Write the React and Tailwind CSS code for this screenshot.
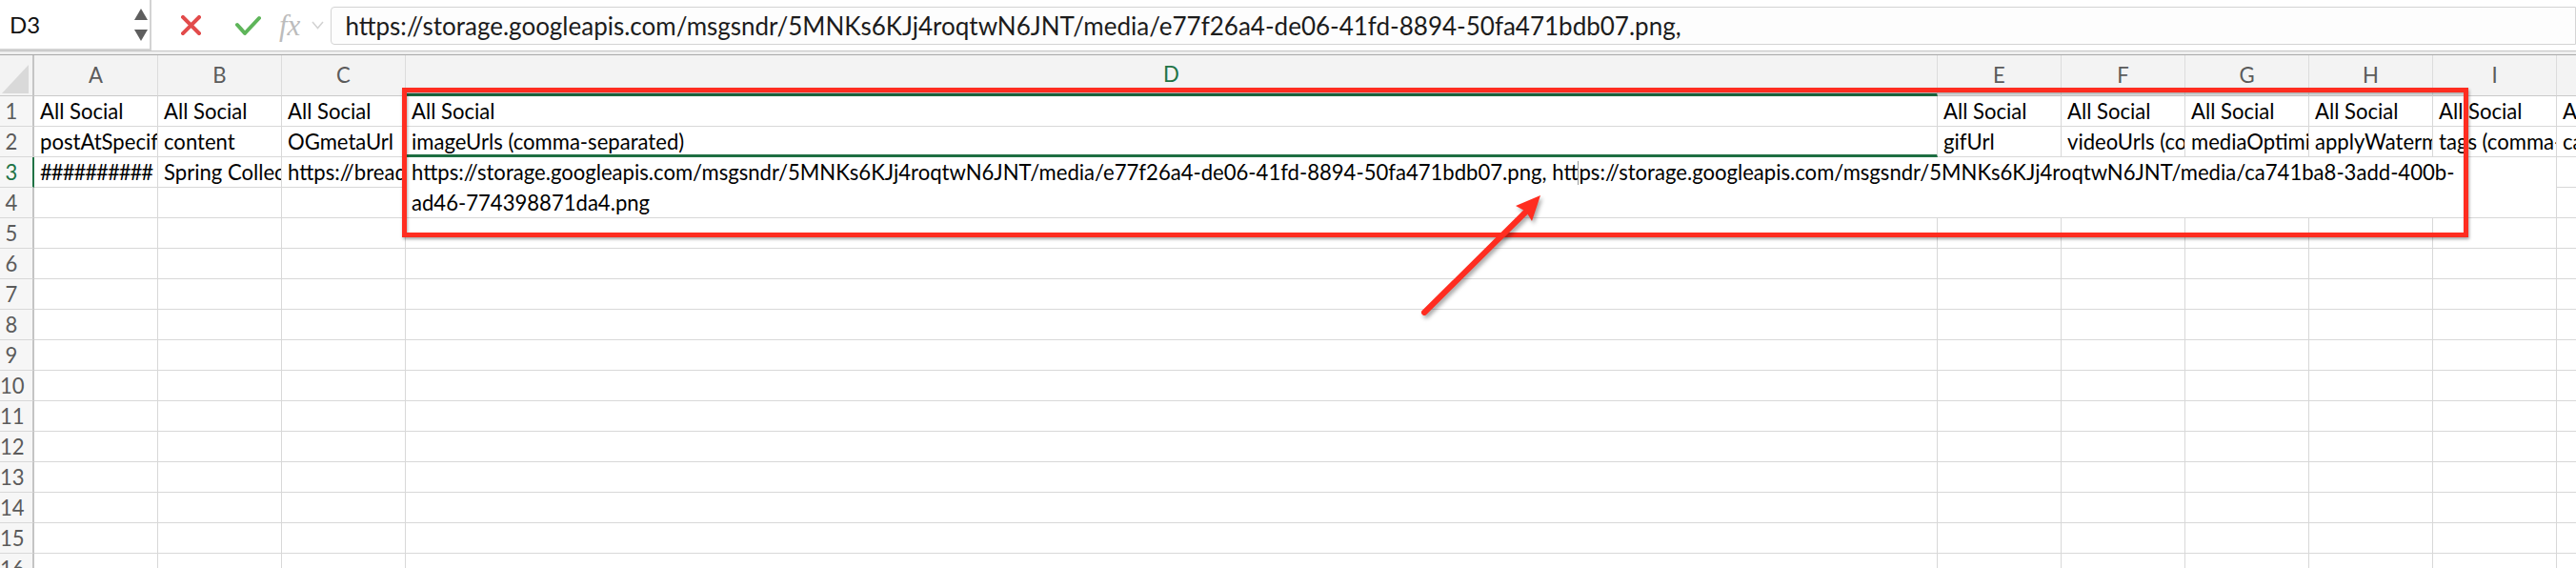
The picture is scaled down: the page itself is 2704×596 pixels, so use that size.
import React from 'react';

const COLS = ['A', 'B', 'C', 'D', 'E', 'F', 'G', 'H', 'I', 'J'];

const HEAD_ROW = Array(10).fill('All Social');
const FIELD_ROW = [
  'postAtSpecificTime',
  'content',
  'OGmetaUrl',
  'imageUrls (comma-separated)',
  'gifUrl',
  'videoUrls (comma-separated)',
  'mediaOptimization',
  'applyWatermark',
  'tags (comma-separated)',
  'category',
];

const URL_FIRST =
  'https://storage.googleapis.com/msgsndr/5MNKs6KJj4roqtwN6JNT/media/e77f26a4-de06-41fd-8894-50fa471bdb07.png';

const Cell = ({ children, className = '' }) => (
  <div
    className={`overflow-hidden whitespace-nowrap border-r border-b border-[#d8d8d8] px-[6px] leading-[31px] ${className}`}
  >
    {children}
  </div>
);

const RowHead = ({ n, active }) => (
  <div
    className={`flex bg-[#f6f6f6] border-b border-b-[#d8d8d8] border-r-2 ${
      active ? 'border-r-[#217346]' : 'border-r-[#c4c4c4]'
    }`}
  >
    <span
      className={`w-[24px] text-center leading-[31px] ${
        active ? 'text-[#217346]' : 'text-[#5b5b5b]'
      }`}
    >
      {n}
    </span>
  </div>
);

const FormulaBar = () => (
  <div className="flex h-[53px]">
    {/* name box */}
    <div className="flex w-[159px] items-center justify-between border-r-2 border-b-2 border-[#d3d3d3] pl-[10px] pr-[2px]">
      <span className="text-[24px] text-[#111]">D3</span>
      <svg width="14" height="34" viewBox="0 0 14 34">
        <polygon points="0,12 7,0 14,12" fill="#5e5e5e" />
        <polygon points="0,22 14,22 7,34" fill="#5e5e5e" />
      </svg>
    </div>

    {/* cancel / enter / fx */}
    <div className="flex items-center">
      <svg className="ml-[31px]" width="21" height="21" viewBox="0 0 21 21">
        <path d="M2 2 L19 19 M19 2 L2 19" stroke="#e24b4b" strokeWidth="4" strokeLinecap="square" />
      </svg>
      <svg className="ml-[36px]" width="27" height="22" viewBox="0 0 27 22">
        <path d="M2 10 L10 19 L25 3" stroke="#5eb55a" strokeWidth="4" fill="none" strokeLinecap="round" strokeLinejoin="round" />
      </svg>
      <span className="ml-[19px] font-['Liberation_Serif',serif] text-[31px] italic leading-none text-[#bcbcbc]">
        fx
      </span>
      <svg className="ml-[12px]" width="13" height="9" viewBox="0 0 13 9">
        <path d="M1 1 L6.5 7.5 L12 1" stroke="#d2d2d2" strokeWidth="1.5" fill="none" />
      </svg>
    </div>

    {/* formula input */}
    <div className="ml-[7px] mt-[7px] mb-[6px] flex flex-1 items-center rounded-l-[4px] border border-[#d4d4d4] bg-[#fdfdfd] pl-[14px] text-[26px] text-[#1c1c1c] whitespace-nowrap overflow-hidden">
      {URL_FIRST},
    </div>
  </div>
);

const Grid = () => (
  <div className="grid grid-cols-[36px_130px_130px_130px_1608px_130px_130px_130px_130px_130px_130px] grid-rows-[43px_repeat(16,32px)] text-[22.1px] text-black">
    {/* header row */}
    <div className="flex items-end justify-end bg-[#f3f3f3] border-r-2 border-r-[#c4c4c4] border-b border-b-[#c9c9c9] pr-[4px] pb-[2px]">
      <svg width="28" height="30" viewBox="0 0 28 30">
        <polygon points="0,30 28,30 28,0" fill="#d9d9d9" />
      </svg>
    </div>
    {COLS.map((c) => (
      <div
        key={c}
        className={`flex items-center justify-center bg-[#f3f3f3] border-r border-r-[#dcdcdc] ${
          c === 'D'
            ? 'border-b-[3px] border-b-[#1e6e42] text-[#217346]'
            : 'border-b border-b-[#c9c9c9] text-[#5b5b5b]'
        }`}
      >
        {c}
      </div>
    ))}

    {/* row 1 */}
    <RowHead n={1} />
    {HEAD_ROW.map((t, i) => (
      <Cell key={i}>{t}</Cell>
    ))}

    {/* row 2 */}
    <RowHead n={2} />
    {FIELD_ROW.map((t, i) => (
      <Cell key={i} className={i === 3 ? 'border-b-[3px] border-b-[#1e6e42]' : ''}>
        {t}
      </Cell>
    ))}

    {/* row 3 + 4, D3 merged across to I4 */}
    <RowHead n={3} active />
    <Cell className="tracking-[-1px]">##########</Cell>
    <Cell>Spring Collection</Cell>
    <Cell>https://breadandbutter.co/spring</Cell>
    <div className="col-span-6 row-span-2 border-r border-b border-[#d8d8d8] px-[6px] leading-[32px] whitespace-nowrap overflow-hidden">
      <div>
        {URL_FIRST}, htt
        <span className="inline-block h-[25px] w-px bg-[#9b9b9b] align-[-5px]" />
        ps://storage.googleapis.com/msgsndr/5MNKs6KJj4roqtwN6JNT/media/ca741ba8-3add-400b-
      </div>
      <div>ad46-774398871da4.png</div>
    </div>
    <Cell />
    <RowHead n={4} />
    <Cell />
    <Cell />
    <Cell />
    <Cell />

    {/* empty rows */}
    {Array.from({ length: 12 }, (_, r) => (
      <React.Fragment key={r}>
        <RowHead n={r + 5} />
        {COLS.map((c) => (
          <Cell key={c} />
        ))}
      </React.Fragment>
    ))}
  </div>
);

export default function App() {
  return (
    <div className="relative h-[596px] w-[2704px] overflow-hidden bg-white font-['Lato','Liberation_Sans',sans-serif]">
      <FormulaBar />
      <div className="h-[5px] border-t border-t-[#c4c4c4] border-b border-b-[#a9a9a9] bg-[#efefef]" />
      <Grid />

      {/* callout box */}
      <div className="absolute left-[422px] top-[92px] h-[157px] w-[2169px] border-[5px] border-[#ff2d20] shadow-[1px_2px_3px_rgba(0,0,0,0.35),inset_1px_2px_3px_rgba(0,0,0,0.3)]" />

      {/* arrow */}
      <svg
        className="absolute left-[1480px] top-[195px] drop-shadow-[2px_3px_2px_rgba(0,0,0,0.35)]"
        width="150"
        height="145"
        viewBox="0 0 150 145"
      >
        <line x1="15" y1="133" x2="122" y2="27" stroke="#ff2d20" strokeWidth="6" strokeLinecap="round" />
        <polygon points="137,10 128,37 122,27 111,21" fill="#ff2d20" />
      </svg>
    </div>
  );
}
